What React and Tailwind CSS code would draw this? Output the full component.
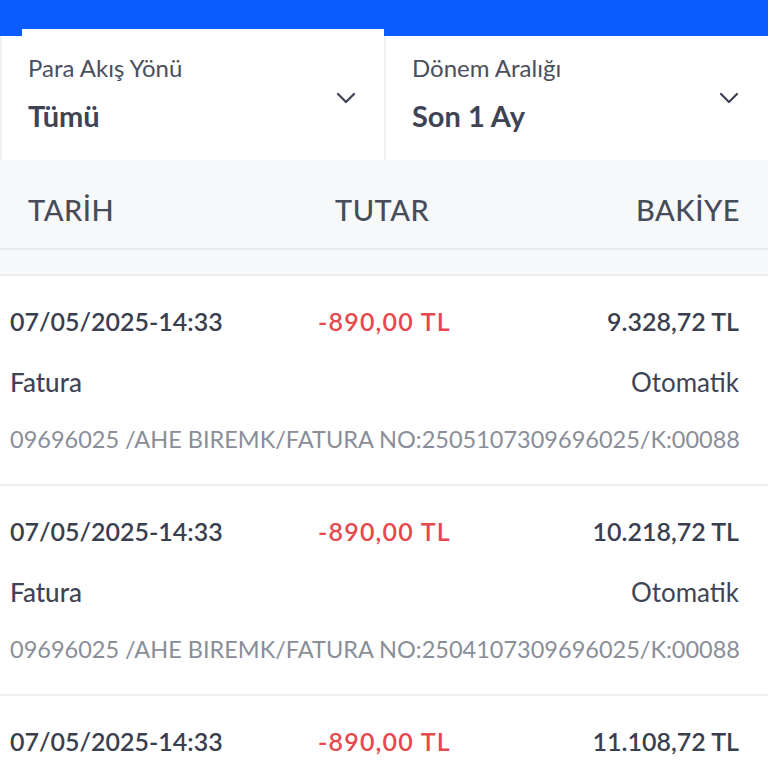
import React from 'react';

const rows = [
  { date: '07/05/2025-14:33', amount: '-890,00 TL', balance: '9.328,72 TL', type: 'Fatura', channel: 'Otomatik', desc: '09696025 /AHE BIREMK/FATURA NO:2505107309696025/K:00088' },
  { date: '07/05/2025-14:33', amount: '-890,00 TL', balance: '10.218,72 TL', type: 'Fatura', channel: 'Otomatik', desc: '09696025 /AHE BIREMK/FATURA NO:2504107309696025/K:00088' },
  { date: '07/05/2025-14:33', amount: '-890,00 TL', balance: '11.108,72 TL', type: 'Fatura', channel: 'Otomatik', desc: '09696025 /AHE BIREMK/FATURA NO:2503107309696025/K:00088' },
];

function Chevron() {
  return (
    <svg width="20" height="12" viewBox="0 0 20 12" fill="none" className="text-[#3d4252]">
      <path d="M2 2l8 8 8-8" stroke="currentColor" strokeWidth="2.2" strokeLinecap="round" strokeLinejoin="round" />
    </svg>
  );
}

function Filter({ label, value, className }) {
  return (
    <div className={`flex items-start justify-between bg-white ${className}`}>
      <div className="flex flex-col">
        <span className="text-[24px] leading-[28px] text-[#4a4f5e]">{label}</span>
        <span className="mt-[18px] text-[29px] leading-[32px] font-bold text-[#3f4455]">{value}</span>
      </div>
      <div className="mt-[38px]">
        <Chevron />
      </div>
    </div>
  );
}

export default function App() {
  return (
    <div className="w-[768px] h-[768px] overflow-hidden bg-white font-['Lato',sans-serif]">
      <div className="h-[36px] bg-[#0b5cff] flex items-end">
        <div className="ml-[22px] w-[362px] h-[7px] bg-white" />
      </div>

      <div className="flex h-[124px]">
        <Filter label="Para Akış Yönü" value="Tümü" className="w-[386px] border-l-2 border-r-2 border-[#eef0f3] pl-[26px] pr-[28px] pt-[18px]" />
        <Filter label="Dönem Aralığı" value="Son 1 Ay" className="flex-1 pl-[26px] pr-[29px] pt-[18px]" />
      </div>

      <div className="h-[90px] bg-[#f7f8fa] border-b-2 border-[#e9ebee] flex items-center pt-[12px] px-[28px] text-[29px] font-medium text-[#474c5b] tracking-[0.5px]">
        <span className="w-[307px]">TARİH</span>
        <span>TUTAR</span>
        <span className="ml-auto">BAKİYE</span>
      </div>
      <div className="h-[26px] bg-[#f8f9fb] border-b-2 border-[#eceef1]" />

      {rows.map((r, i) => (
        <div key={i} className="h-[210px] border-b-2 border-[#eceef1] pl-[10px] pr-[29px] pt-[30px] flex flex-col">
          <div className="flex items-center h-[32px] text-[25px] font-semibold">
            <span className="w-[308px] text-[#3a3f50]">{r.date}</span>
            <span className="text-[#e5484d] tracking-[1.2px]">{r.amount}</span>
            <span className="ml-auto text-[#3a3f50]">{r.balance}</span>
          </div>
          <div className="flex items-center justify-between h-[32px] mt-[28px] text-[26px] text-[#3f4455]">
            <span className="font-medium">{r.type}</span>
            <span>{r.channel}</span>
          </div>
          <div className="h-[32px] mt-[26px] flex items-center text-[23.5px] text-[#8a8e98] whitespace-nowrap">
            {r.desc}
          </div>
        </div>
      ))}
    </div>
  );
}
